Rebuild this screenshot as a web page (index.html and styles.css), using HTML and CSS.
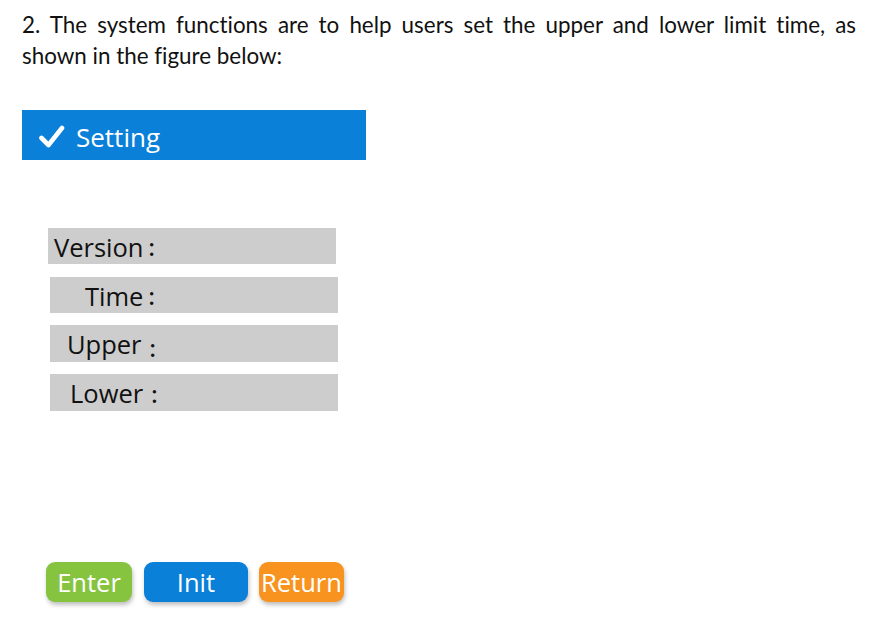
FILE: index.html
```html
<!DOCTYPE html>
<html>
<head>
<meta charset="utf-8">
<link rel="stylesheet" href="styles.css">
</head>
<body>
<div class="page">
  <p class="intro">2. The system functions are to help users set the upper and lower limit time, as shown in the figure below:</p>
  <div class="titlebar">
    <svg class="check" width="26" height="24" viewBox="0 0 26 24"><path d="M2.5 13 L9.5 20 L23 3" fill="none" stroke="#fff" stroke-width="4.6" stroke-linecap="round" stroke-linejoin="round"/></svg>
    <span class="title">Setting</span>
  </div>
  <div class="rows">
    <div class="row row-version"><span class="label">Version</span><span class="colon">:</span></div>
    <div class="row row-time"><span class="label">Time</span><span class="colon">:</span></div>
    <div class="row row-upper"><span class="label">Upper</span><span class="colon low">:</span></div>
    <div class="row row-lower"><span class="label">Lower</span><span class="colon">:</span></div>
  </div>
  <div class="buttons">
    <div class="btn btn-enter">Enter</div>
    <div class="btn btn-init">Init</div>
    <div class="btn btn-return">Return</div>
  </div>
</div>
</body>
</html>
```

FILE: styles.css
```css
html, body {
  margin: 0;
  padding: 0;
  background: #ffffff;
}
.page {
  width: 885px;
  height: 625px;
  padding: 9px 0 0 0;
  box-sizing: border-box;
  font-family: "Open Sans", "DejaVu Sans", sans-serif;
  color: #111;
}
.intro {
  margin: 0 29px 0 22px;
  font-family: "Lato", "Liberation Sans", sans-serif;
  font-variant-ligatures: none;
  font-size: 22.4px;
  line-height: 31px;
  text-align: justify;
  color: #111;
}
.titlebar {
  margin: 39px 0 0 22px;
  width: 344px;
  height: 50px;
  background: #0a80d8;
  display: flex;
  align-items: center;
  box-sizing: border-box;
  padding-left: 17px;
  gap: 11px;
}
.check {
  display: block;
  margin-top: 4px;
}
.title {
  color: #fff;
  font-size: 26px;
  line-height: 1;
  margin-top: 3px;
}
.rows {
  margin-top: 68px;
  display: flex;
  flex-direction: column;
  gap: 12px;
}
.row {
  width: 288px;
  height: 36px;
  box-sizing: border-box;
  padding-top: 3px;
  background: #cdcdcd;
  margin-left: 50px;
  display: flex;
  align-items: center;
  font-size: 25.5px;
  line-height: 1;
  color: #111;
}
.row-version {
  margin-left: 48px;
  margin-bottom: 1px;
}
.row-upper, .row-lower {
  height: 37px;
}
.row-version .label { padding-left: 6px; }
.row-time .label { padding-left: 35px; }
.row-upper .label { padding-left: 17px; }
.row-lower .label { padding-left: 20px; }
.colon {
  margin-left: 5px;
  font-size: 23px;
  font-weight: 600;
}
.row-upper .colon, .row-lower .colon { margin-left: 8px; }
.colon.low {
  position: relative;
  top: 3px;
}
.buttons {
  margin: 151px 0 0 46px;
  display: flex;
  gap: 12px;
}
.btn {
  height: 40px;
  border-radius: 9px;
  color: #fff;
  font-size: 25.5px;
  line-height: 40px;
  text-align: center;
  box-shadow: 1px 3px 4px rgba(0, 0, 0, 0.25);
  white-space: nowrap;
}
.btn-enter {
  width: 86px;
  background: #86c440;
}
.btn-init {
  width: 104px;
  background: #0a80d8;
}
.btn-return {
  width: 85px;
  background: #f7931e;
  margin-left: -1px;
}
```
